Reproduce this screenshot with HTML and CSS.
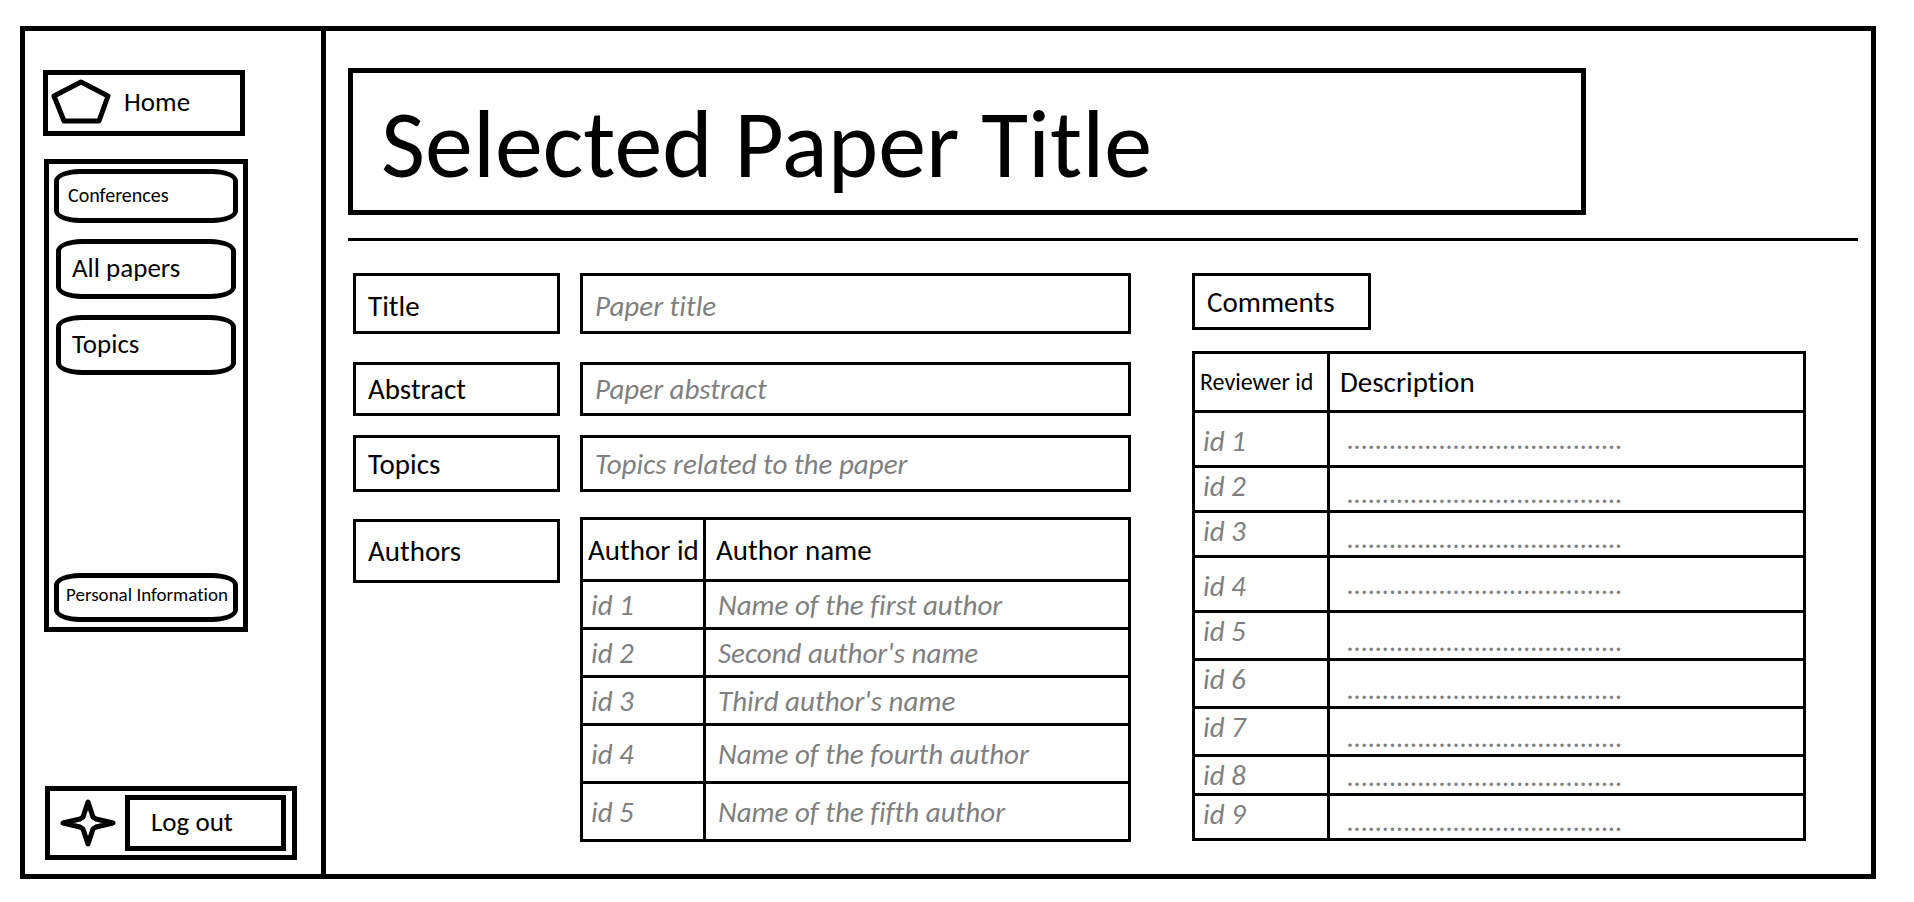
FILE: index.html
```html
<!DOCTYPE html>
<html lang="en">
<head>
<meta charset="utf-8">
<meta name="viewport" content="width=device-width, initial-scale=1">
<title>Selected Paper Title</title>
<link rel="stylesheet" href="styles.css">
</head>
<body>
<div class="frame">
  <aside class="sidebar">
    <a class="home" href="#">
      <svg class="home-icon" width="60" height="46" viewBox="0 0 60 46" aria-hidden="true"><path d="M30 3 L57 17 L48 42 H13 L3 17 Z"/></svg>
      <span>Home</span>
    </a>
    <nav class="menu">
      <button class="pill pill-small" type="button">Conferences</button>
      <button class="pill" type="button">All papers</button>
      <button class="pill" type="button">Topics</button>
      <button class="pill pill-small pill-last" type="button">Personal Information</button>
    </nav>
    <div class="session">
      <svg class="star-icon" width="56" height="48" viewBox="0 0 56 48" aria-hidden="true"><path d="M28 3 L33 18 L36 20 L53 24 L36 28 L33 30 L28 45 L23 30 L20 28 L3 24 L20 20 L23 18 Z"/></svg>
      <button class="logout" type="button">Log out</button>
    </div>
  </aside>
  <main class="main">
    <h1 class="heading">Selected Paper Title</h1>
    <hr class="rule">
    <div class="content">
      <form class="form">
        <label class="box field-title" for="title">Title</label>
        <input class="box field-title" id="title" type="text" placeholder="Paper title">
        <label class="box field-abstract" for="abstract">Abstract</label>
        <input class="box field-abstract" id="abstract" type="text" placeholder="Paper abstract">
        <label class="box field-topics" for="topics">Topics</label>
        <input class="box field-topics" id="topics" type="text" placeholder="Topics related to the paper">
        <div class="box field-authors" id="authors-label">Authors</div>
        <table class="grid authors" aria-labelledby="authors-label">
          <thead><tr><th>Author id</th><th>Author name</th></tr></thead>
          <tbody>
            <tr><td>id 1</td><td>Name of the first author</td></tr>
            <tr><td>id 2</td><td>Second author's name</td></tr>
            <tr><td>id 3</td><td>Third author's name</td></tr>
            <tr class="tall"><td>id 4</td><td>Name of the fourth author</td></tr>
            <tr class="tall"><td>id 5</td><td>Name of the fifth author</td></tr>
          </tbody>
        </table>
      </form>
      <section class="comments">
        <h2 class="box comments-title" id="comments-label">Comments</h2>
        <table class="grid reviews" aria-labelledby="comments-label">
          <thead><tr><th>Reviewer id</th><th>Description</th></tr></thead>
          <tbody>
            <tr class="tall"><td>id 1</td><td>.......................................</td></tr>
            <tr class="short"><td>id 2</td><td>.......................................</td></tr>
            <tr class="short"><td>id 3</td><td>.......................................</td></tr>
            <tr class="tall"><td>id 4</td><td>.......................................</td></tr>
            <tr><td>id 5</td><td>.......................................</td></tr>
            <tr><td>id 6</td><td>.......................................</td></tr>
            <tr><td>id 7</td><td>.......................................</td></tr>
            <tr class="tight"><td>id 8</td><td>.......................................</td></tr>
            <tr class="short"><td>id 9</td><td>.......................................</td></tr>
          </tbody>
        </table>
      </section>
    </div>
  </main>
</div>
</body>
</html>
```
FILE: styles.css
```css
* {
  box-sizing: border-box;
}

body {
  margin: 0;
  padding: 26px 38px 24px 20px;
  min-height: 100vh;
  display: flex;
  background: #fff;
  color: #000;
  font-family: Carlito, Calibri, Lato, sans-serif;
  font-size: 29px;
  font-variant-ligatures: none;
  line-height: 28px;
}

button,
input {
  font: inherit;
  color: inherit;
  background: #fff;
}

svg {
  flex: none;
  fill: none;
  stroke: #000;
  stroke-width: 5;
  stroke-linejoin: round;
}

.frame {
  flex: 1;
  display: flex;
  border: 5px solid #000;
}

/* Sidebar */

.sidebar {
  flex: none;
  width: 301px;
  display: flex;
  flex-direction: column;
  align-items: flex-start;
  padding: 39px 18px 14px;
  border-right: 5px solid #000;
  font-size: 27px;
}

.home {
  width: 202px;
  height: 66px;
  display: flex;
  align-items: center;
  gap: 13px;
  padding: 0 0 2px 3px;
  border: 5px solid #000;
  color: inherit;
  text-decoration: none;
}

.menu {
  flex: 1;
  width: 204px;
  display: flex;
  flex-direction: column;
  gap: 16px;
  margin: 23px 0 154px 1px;
  padding: 5px;
  border: 5px solid #000;
}

.pill {
  height: 60px;
  margin: 0 2px;
  padding: 0 11px 2px;
  border: 5px solid #000;
  border-radius: 26px / 12px;
  text-align: left;
  white-space: nowrap;
}

.pill-small {
  height: 54px;
  margin: 0;
  padding: 0 9px 2px;
  font-size: 20px;
}

.pill-last {
  height: 49px;
  margin-top: auto;
  padding: 0 0 6px 7px;
  font-size: 19px;
}

.session {
  width: 252px;
  height: 74px;
  display: flex;
  align-items: center;
  gap: 9px;
  margin-left: 2px;
  padding: 0 6px 0 10px;
  border: 5px solid #000;
}

.logout {
  flex: 1;
  height: 56px;
  padding: 0 21px 2px;
  border: 5px solid #000;
  text-align: left;
}

/* Main area */

.main {
  flex: 1;
  min-width: 0;
  padding: 37px 13px 32px 22px;
}

.heading {
  width: 82%;
  margin: 0;
  padding: 22px 28px 15px;
  border: 5px solid #000;
  font-size: 96px;
  font-weight: 400;
  line-height: 100px;
}

.rule {
  height: 3px;
  margin: 23px 0 32px;
  border: 0;
  background: #000;
}

.content {
  display: grid;
  grid-template-columns: 778fr 614fr;
  gap: 61px;
  padding: 0 52px 0 5px;
}

.box {
  border: 3px solid #000;
  padding: 0 12px;
  display: flex;
  align-items: center;
  min-width: 0;
}

.form {
  display: grid;
  grid-template-columns: 207px 1fr;
  column-gap: 20px;
  align-items: start;
  align-content: start;
}

.form input::placeholder {
  color: #7f7f7f;
  font-style: italic;
  opacity: 1;
}

.field-title {
  height: 61px;
  margin-bottom: 28px;
  padding-top: 4px;
}

.field-abstract {
  height: 54px;
  margin-bottom: 19px;
}

.field-topics {
  height: 57px;
  margin-bottom: 25px;
}

.field-authors {
  height: 64px;
  margin-top: 2px;
}

/* Tables */

.grid {
  width: 100%;
  table-layout: fixed;
  border-collapse: collapse;
}

.grid th,
.grid td {
  border: 3px solid #000;
  padding: 0 12px;
  text-align: left;
  font-weight: 400;
  white-space: nowrap;
}

.grid th:first-child {
  padding: 0 5px;
}

.grid th:last-child {
  padding-left: 10px;
}

.grid td {
  color: #7f7f7f;
  font-style: italic;
}

.grid td:first-child {
  padding-left: 8px;
}

.authors th:first-child {
  width: 123px;
}

.authors thead tr {
  height: 62px;
}

.authors tbody tr {
  height: 48px;
}

.authors tbody .tall {
  height: 58px;
}

.comments-title {
  width: 179px;
  height: 57px;
  margin: 0 0 21px;
  font-size: 29px;
  font-weight: 400;
}

.reviews th:first-child {
  width: 135px;
  font-size: 24px;
}

.reviews thead tr {
  height: 59px;
}

.reviews tbody tr {
  height: 48px;
}

.reviews tbody .short {
  height: 45px;
}

.reviews tbody .tight {
  height: 39px;
}

.reviews tbody .tall {
  height: 55px;
}

.reviews td:first-child {
  padding-top: 4px;
  vertical-align: top;
}

.reviews td:last-child {
  padding: 0 12px 2px 17px;
  font-size: 28px;
  vertical-align: bottom;
}

.reviews .tall td {
  vertical-align: middle;
}

.reviews .tall td:last-child {
  padding-top: 4px;
  vertical-align: middle;
}
```
